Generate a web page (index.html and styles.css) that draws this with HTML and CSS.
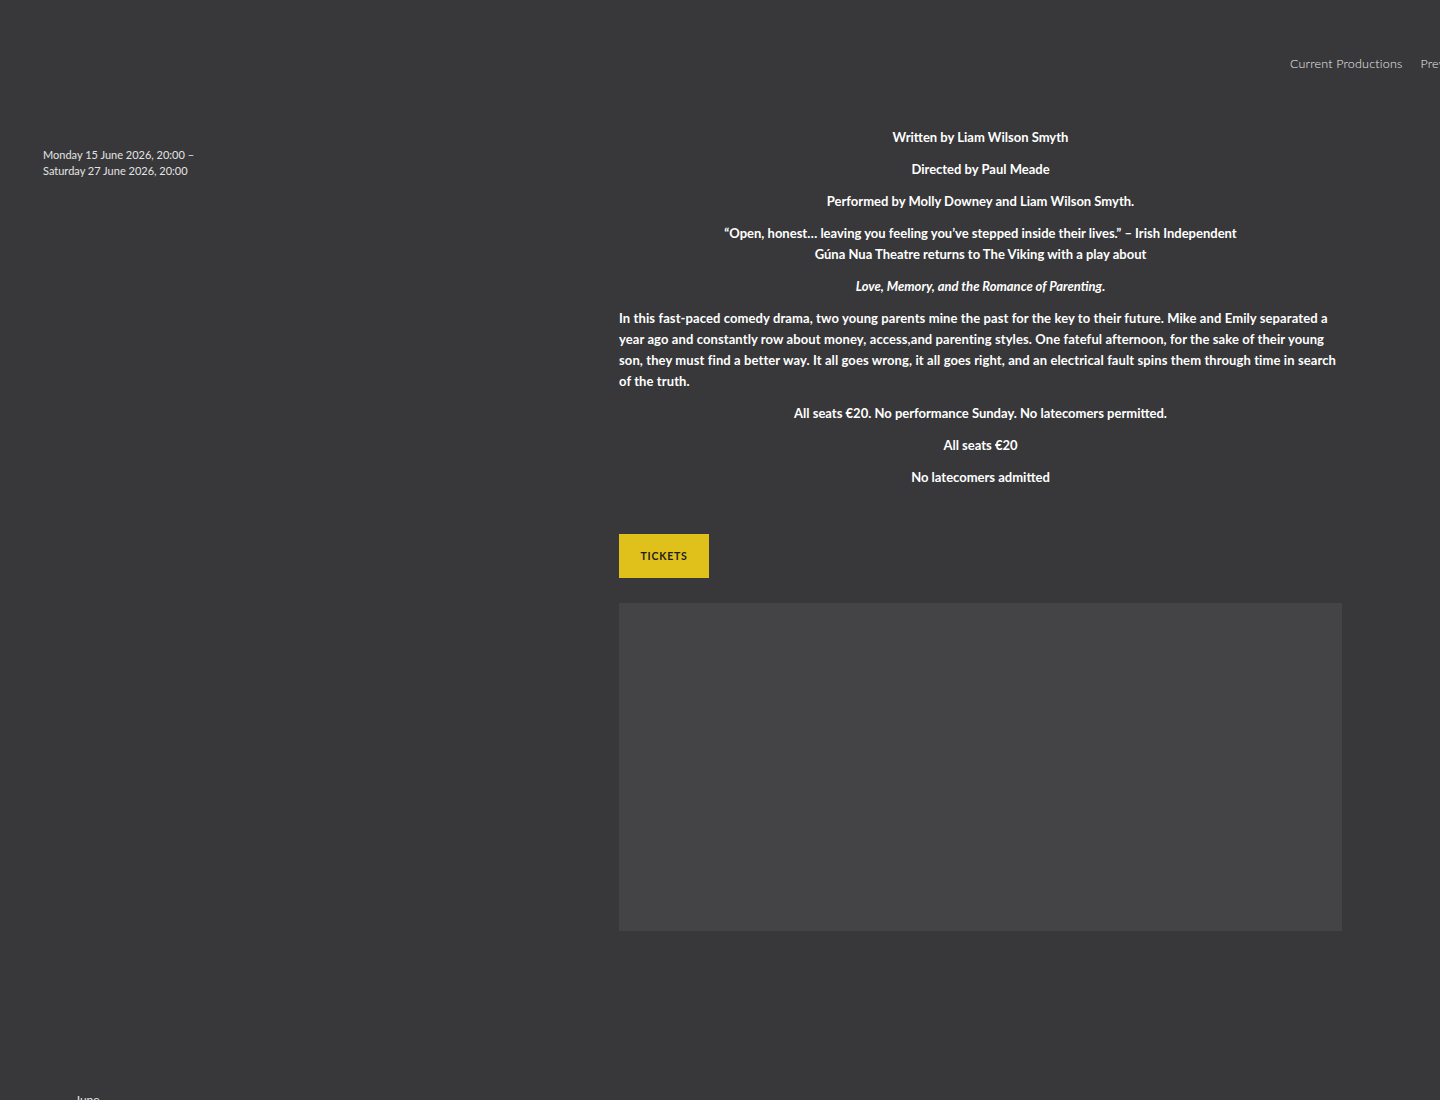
FILE: index.html
```html
<!DOCTYPE html>
<html lang="en">
<head>
  <meta charset="UTF-8">
  <meta name="viewport" content="width=device-width, initial-scale=1.0">
  <title>Love, Memory, and the Romance of Parenting – The Viking</title>
  <link rel="stylesheet" href="styles.css">
</head>
<body>
  <header class="site-header">
    <nav class="main-nav">
      <a href="#">Current Productions</a>
      <a href="#">Previous Productions</a>
    </nav>
  </header>

  <main class="event">
    <aside class="event-meta">
      <p class="event-dates">Monday 15 June 2026, 20:00 –<br>Saturday 27 June 2026, 20:00</p>
    </aside>

    <section class="event-body">
      <div class="event-text">
        <p class="center">Written by Liam Wilson Smyth</p>
        <p class="center">Directed by Paul Meade</p>
        <p class="center">Performed by Molly Downey and Liam Wilson Smyth.</p>
        <p class="center">“Open, honest… leaving you feeling you’ve stepped inside their lives.” – Irish Independent<br>Gúna Nua Theatre returns to The Viking with a play about</p>
        <p class="center"><em>Love, Memory, and the Romance of Parenting.</em></p>
        <p class="synopsis">In this fast-paced comedy drama, two young parents mine the past for the key to their future. Mike and Emily separated a year ago and constantly row about money, access,and parenting styles. One fateful afternoon, for the sake of their young son, they must find a better way. It all goes wrong, it all goes right, and an electrical fault spins them through time in search of the truth.</p>
        <p class="center">All seats €20. No performance Sunday. No latecomers permitted.</p>
        <p class="center">All seats €20</p>
        <p class="center">No latecomers admitted</p>
      </div>

      <a class="button tickets" href="#">Tickets</a>

      <div class="video-embed"></div>
    </section>
  </main>

  <footer class="site-footer">
    <span class="month">June</span>
  </footer>
</body>
</html>
```

FILE: styles.css
```css
body {
  margin: 0;
  background-color: #38383a;
  color: #ffffff;
  font-family: Lato, "Open Sans", sans-serif;
  overflow-x: hidden;
}

a {
  color: inherit;
  text-decoration: none;
}

.site-header {
  display: flex;
  height: 127px;
  padding-top: 56px;
  box-sizing: border-box;
}

.main-nav {
  display: flex;
  gap: 18px;
  margin-left: 1290px;
  white-space: nowrap;
  font-size: 12.5px;
  font-weight: 300;
  color: #ececec;
  letter-spacing: 0.2px;
}

.event {
  display: grid;
  grid-template-columns: 576px 723px;
  padding-left: 43px;
}

.event-dates {
  margin: 20px 0 0;
  font-size: 11px;
  line-height: 16px;
  font-weight: 400;
  color: #e4e4e4;
}

.event-text {
  font-size: 13px;
  line-height: 21px;
  font-weight: 700;
}

.event-text p {
  margin: 0 0 11px;
}

.center {
  text-align: center;
}

.synopsis {
  letter-spacing: 0.1px;
}

.event-text em {
  font-style: italic;
}

.button {
  display: inline-flex;
  align-items: center;
  justify-content: center;
}

.tickets {
  width: 90px;
  height: 44px;
  margin-top: 35px;
  background-color: #e0c01a;
  color: #1d1d1d;
  font-size: 10.5px;
  font-weight: 700;
  text-transform: uppercase;
  letter-spacing: 0.8px;
}

.video-embed {
  height: 328px;
  margin-top: 25px;
  background-color: #444446;
}

.site-footer {
  padding: 162px 0 0 75px;
  font-size: 12px;
  line-height: 14px;
  color: #e4e4e4;
}
```
